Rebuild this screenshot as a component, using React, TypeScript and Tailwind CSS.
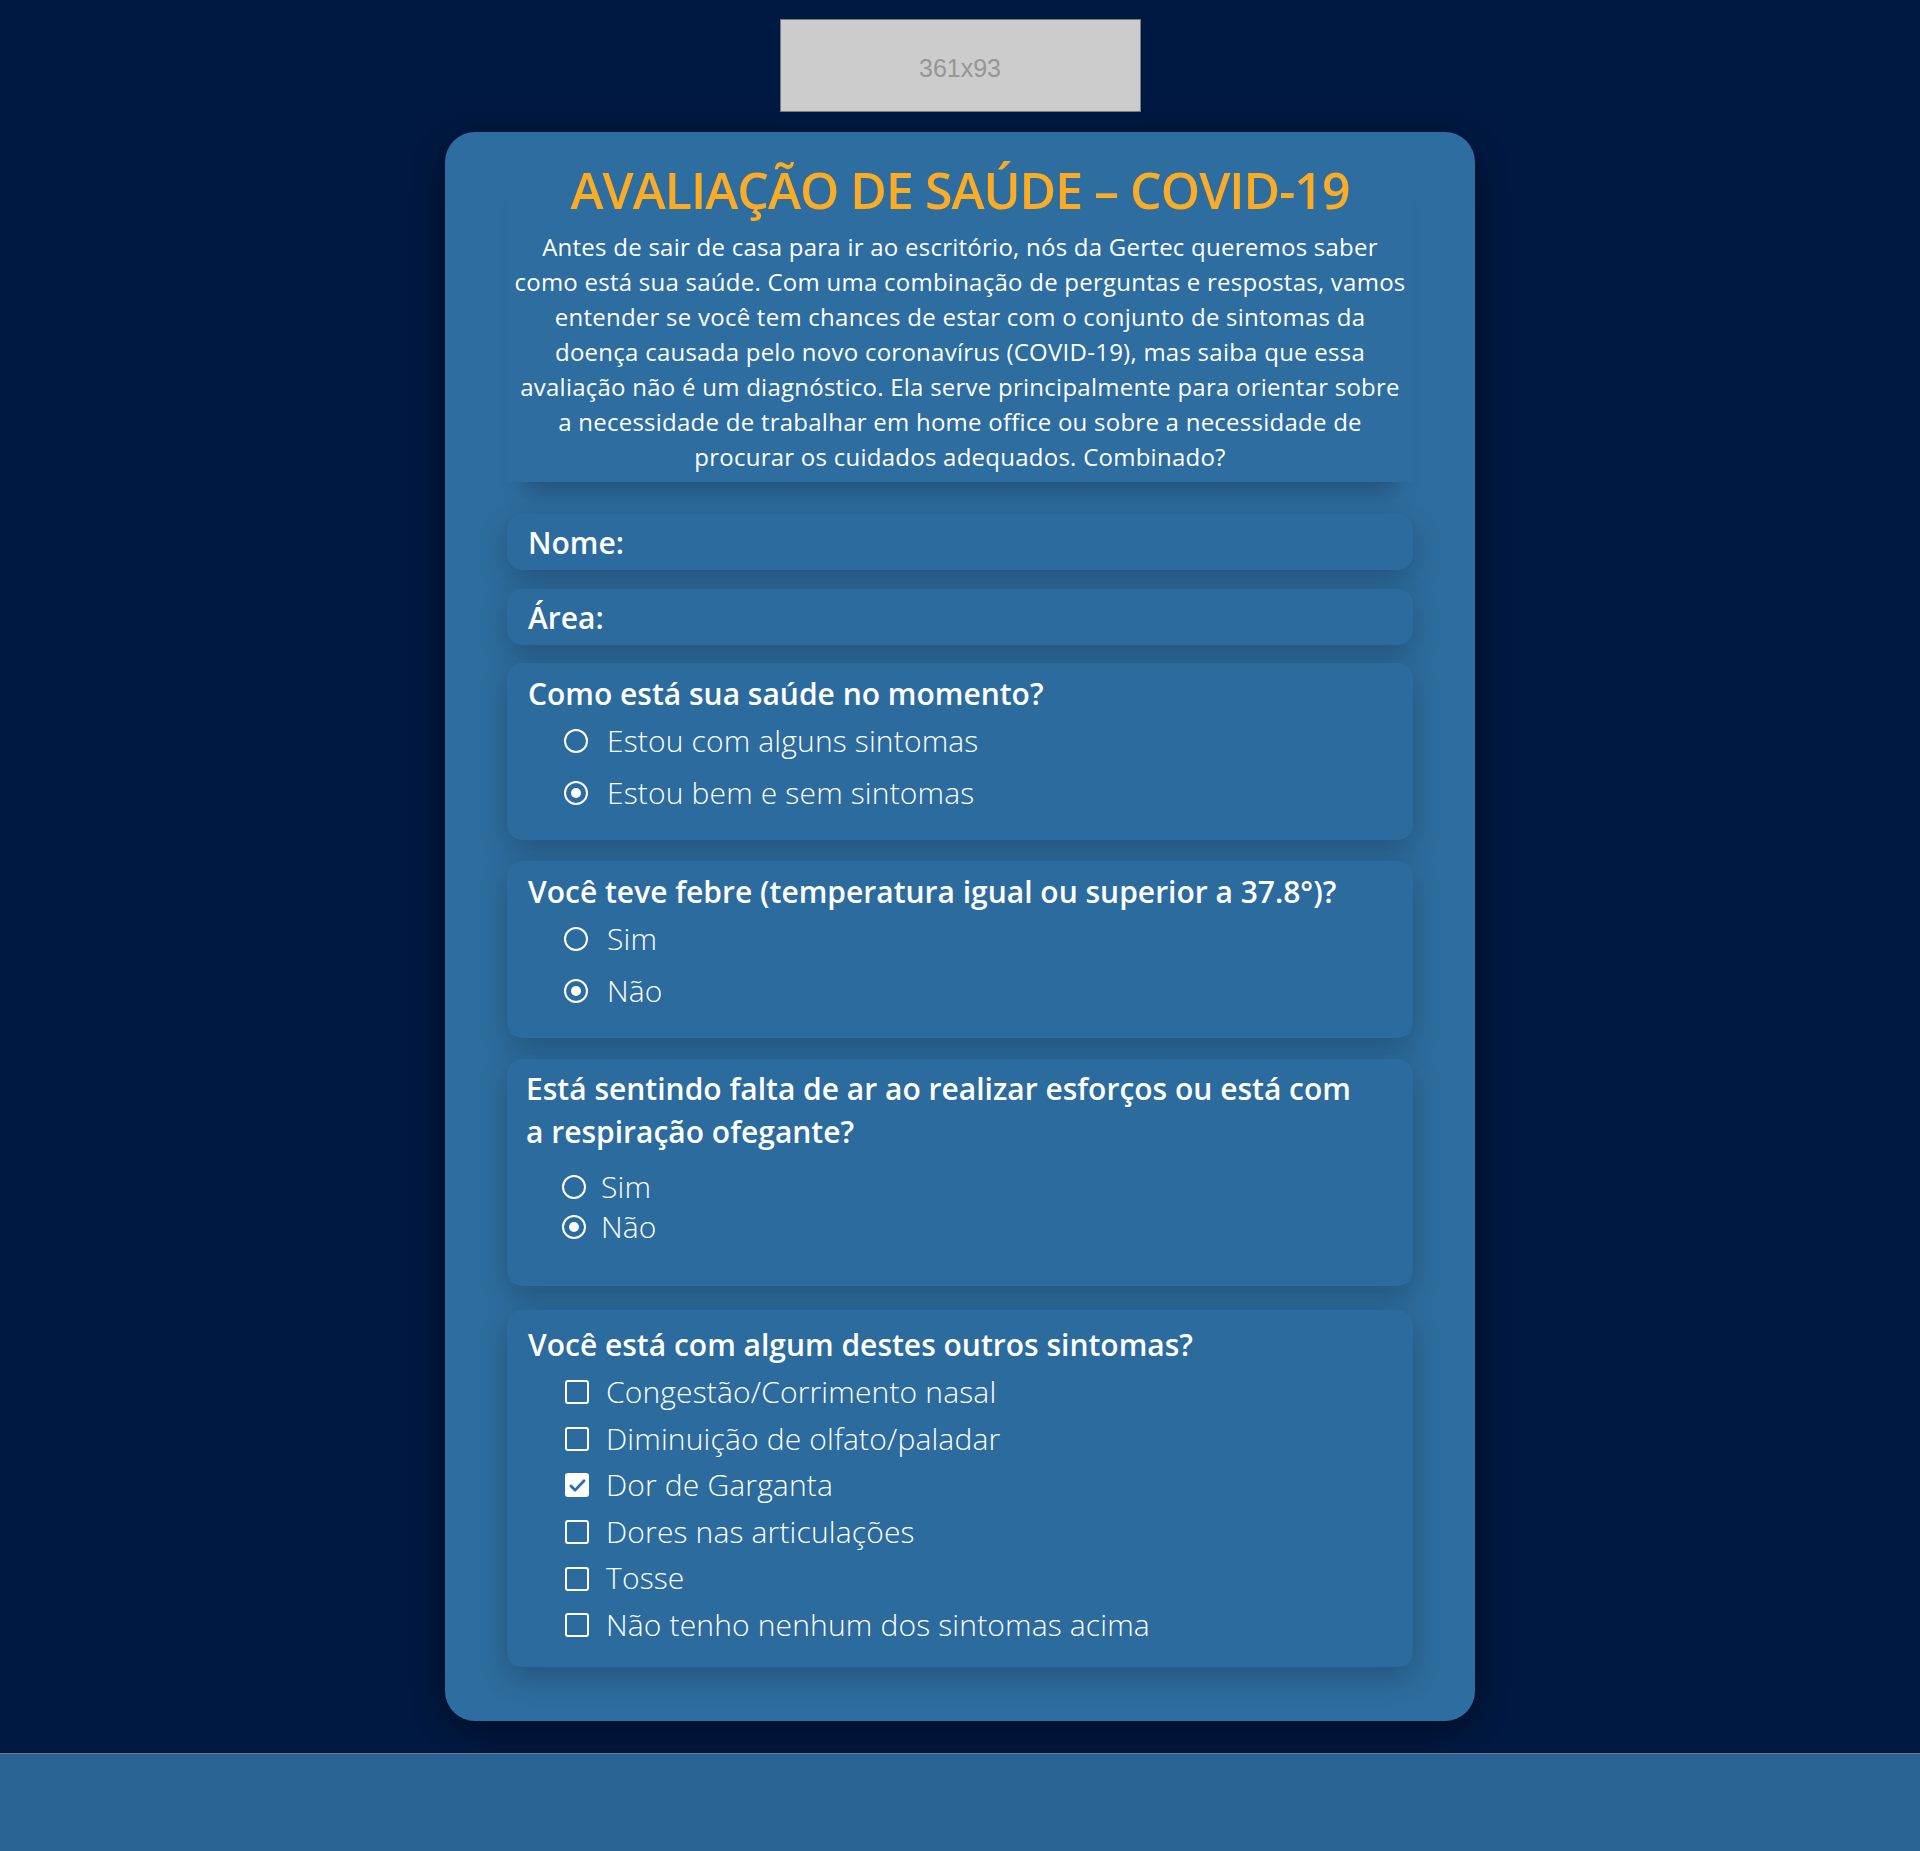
import React from 'react';

// Health check form (static render of the screenshot state)

const font = "font-['Open_Sans',sans-serif]";

interface OptionProps {
  label: string;
  checked?: boolean;
}

const Radio: React.FC<{ checked?: boolean }> = ({ checked }) => (
  <span className="flex h-6 w-6 shrink-0 items-center justify-center rounded-full border-2 border-white">
    {checked && <span className="h-[10px] w-[10px] rounded-full bg-white" />}
  </span>
);

const Checkbox: React.FC<{ checked?: boolean }> = ({ checked }) =>
  checked ? (
    <span className="flex h-6 w-6 shrink-0 items-center justify-center rounded-[3px] bg-white">
      <svg viewBox="0 0 24 24" className="h-[21px] w-[21px]" fill="none" stroke="#2c6c9f" strokeWidth="3.2" strokeLinecap="round" strokeLinejoin="round">
        <path d="M4.5 12.5l4.8 4.8L19.5 6.5" />
      </svg>
    </span>
  ) : (
    <span className="h-6 w-6 shrink-0 rounded-[3px] border-2 border-white" />
  );

const labelClass = 'text-[30px] font-[350] tracking-[0.15px] text-white';

const RadioRow: React.FC<OptionProps & { tight?: boolean }> = ({ label, checked, tight }) => (
  <div className={`flex items-center pl-[36px] ${tight ? 'gap-[15px] leading-[40px]' : 'gap-[19px] leading-[52px]'}`}>
    <Radio checked={checked} />
    <span className={labelClass}>{label}</span>
  </div>
);

const CheckRow: React.FC<OptionProps> = ({ label, checked }) => (
  <div className="flex items-center gap-[17px] pl-[37px] leading-[46.6px]">
    <Checkbox checked={checked} />
    <span className={labelClass}>{label}</span>
  </div>
);

const boxClass =
  'rounded-[15px] bg-[#2c6b9d] shadow-[0_10px_30px_rgba(0,0,0,0.22)]';
const questionClass = 'text-[30px] font-semibold leading-[43px] text-white';

const sintomas = [
  { label: 'Congestão/Corrimento nasal', checked: false },
  { label: 'Diminuição de olfato/paladar', checked: false },
  { label: 'Dor de Garganta', checked: true },
  { label: 'Dores nas articulações', checked: false },
  { label: 'Tosse', checked: false },
  { label: 'Não tenho nenhum dos sintomas acima', checked: false },
];

const App: React.FC = () => {
  return (
    <div className={`${font} min-h-[1851px] bg-[#001943]`}>
      <div className="flex justify-center pt-[19px]">
        <div className="flex h-[93px] w-[361px] items-center justify-center border border-[#7a7a7a] bg-[#cccccc]">
          <span className="pt-[6px] font-['Liberation_Sans',Arial,sans-serif] text-[25px] text-[#969696]">361x93</span>
        </div>
      </div>

      <div className="mx-auto mt-[20px] w-[1030px] rounded-[30px] bg-[#2d6d9f] px-[62px] pt-[28px] pb-[54px] shadow-[0_10px_40px_rgba(0,0,0,0.45)]">
        <div className="pb-[8px] text-center shadow-[0_26px_24px_-18px_rgba(0,0,0,0.28)]">
          <h1 className="whitespace-nowrap text-[50px] font-[550] leading-[60px] tracking-[-1px] text-[#fbac24]">
            AVALIAÇÃO DE SAÚDE – COVID-19
          </h1>
          <p className="mt-[9px] whitespace-nowrap text-[24px] leading-[35px] tracking-[0.25px] text-white">
            Antes de sair de casa para ir ao escritório, nós da Gertec queremos saber
            <br />
            como está sua saúde. Com uma combinação de perguntas e respostas, vamos
            <br />
            entender se você tem chances de estar com o conjunto de sintomas da
            <br />
            doença causada pelo novo coronavírus (COVID-19), mas saiba que essa
            <br />
            avaliação não é um diagnóstico. Ela serve principalmente para orientar sobre
            <br />
            a necessidade de trabalhar em home office ou sobre a necessidade de
            <br />
            procurar os cuidados adequados. Combinado?
          </p>
        </div>

        <div className={`${boxClass} mt-[32px] h-[56px] px-[21px]`}>
          <span className="block pt-[1px] text-[30px] font-semibold leading-[56px] text-white">Nome:</span>
        </div>

        <div className={`${boxClass} mt-[19px] h-[56px] px-[21px]`}>
          <span className="block pt-[1px] text-[30px] font-semibold leading-[56px] text-white">Área:</span>
        </div>

        <div className={`${boxClass} mt-[18px] px-[21px] pt-[9px] pb-[21px]`}>
          <p className={questionClass}>Como está sua saúde no momento?</p>
          <RadioRow label="Estou com alguns sintomas" />
          <RadioRow label="Estou bem e sem sintomas" checked />
        </div>

        <div className={`${boxClass} mt-[21px] px-[21px] pt-[9px] pb-[21px]`}>
          <p className={questionClass}>Você teve febre (temperatura igual ou superior a 37.8°)?</p>
          <RadioRow label="Sim" />
          <RadioRow label="Não" checked />
        </div>

        <div className={`${boxClass} mt-[21px] pr-[21px] pl-[19px] pt-[8px] pb-[39px]`}>
          <p className={`${questionClass} whitespace-nowrap`}>
            Está sentindo falta de ar ao realizar esforços ou está com
            <br />
            a respiração ofegante?
          </p>
          <div className="mt-[14px]">
            <RadioRow label="Sim" tight />
            <RadioRow label="Não" checked tight />
          </div>
        </div>

        <div className={`${boxClass} mt-[24px] px-[21px] pt-[13px] pb-[18px]`}>
          <p className={questionClass}>Você está com algum destes outros sintomas?</p>
          <div className="mt-[3px]">
            {sintomas.map((s) => (
              <CheckRow key={s.label} label={s.label} checked={s.checked} />
            ))}
          </div>
        </div>
      </div>

      <footer className="mt-[32px] h-[100px] border-y border-[#737a82] bg-[#2a6496]" />
    </div>
  );
};

export default App;
